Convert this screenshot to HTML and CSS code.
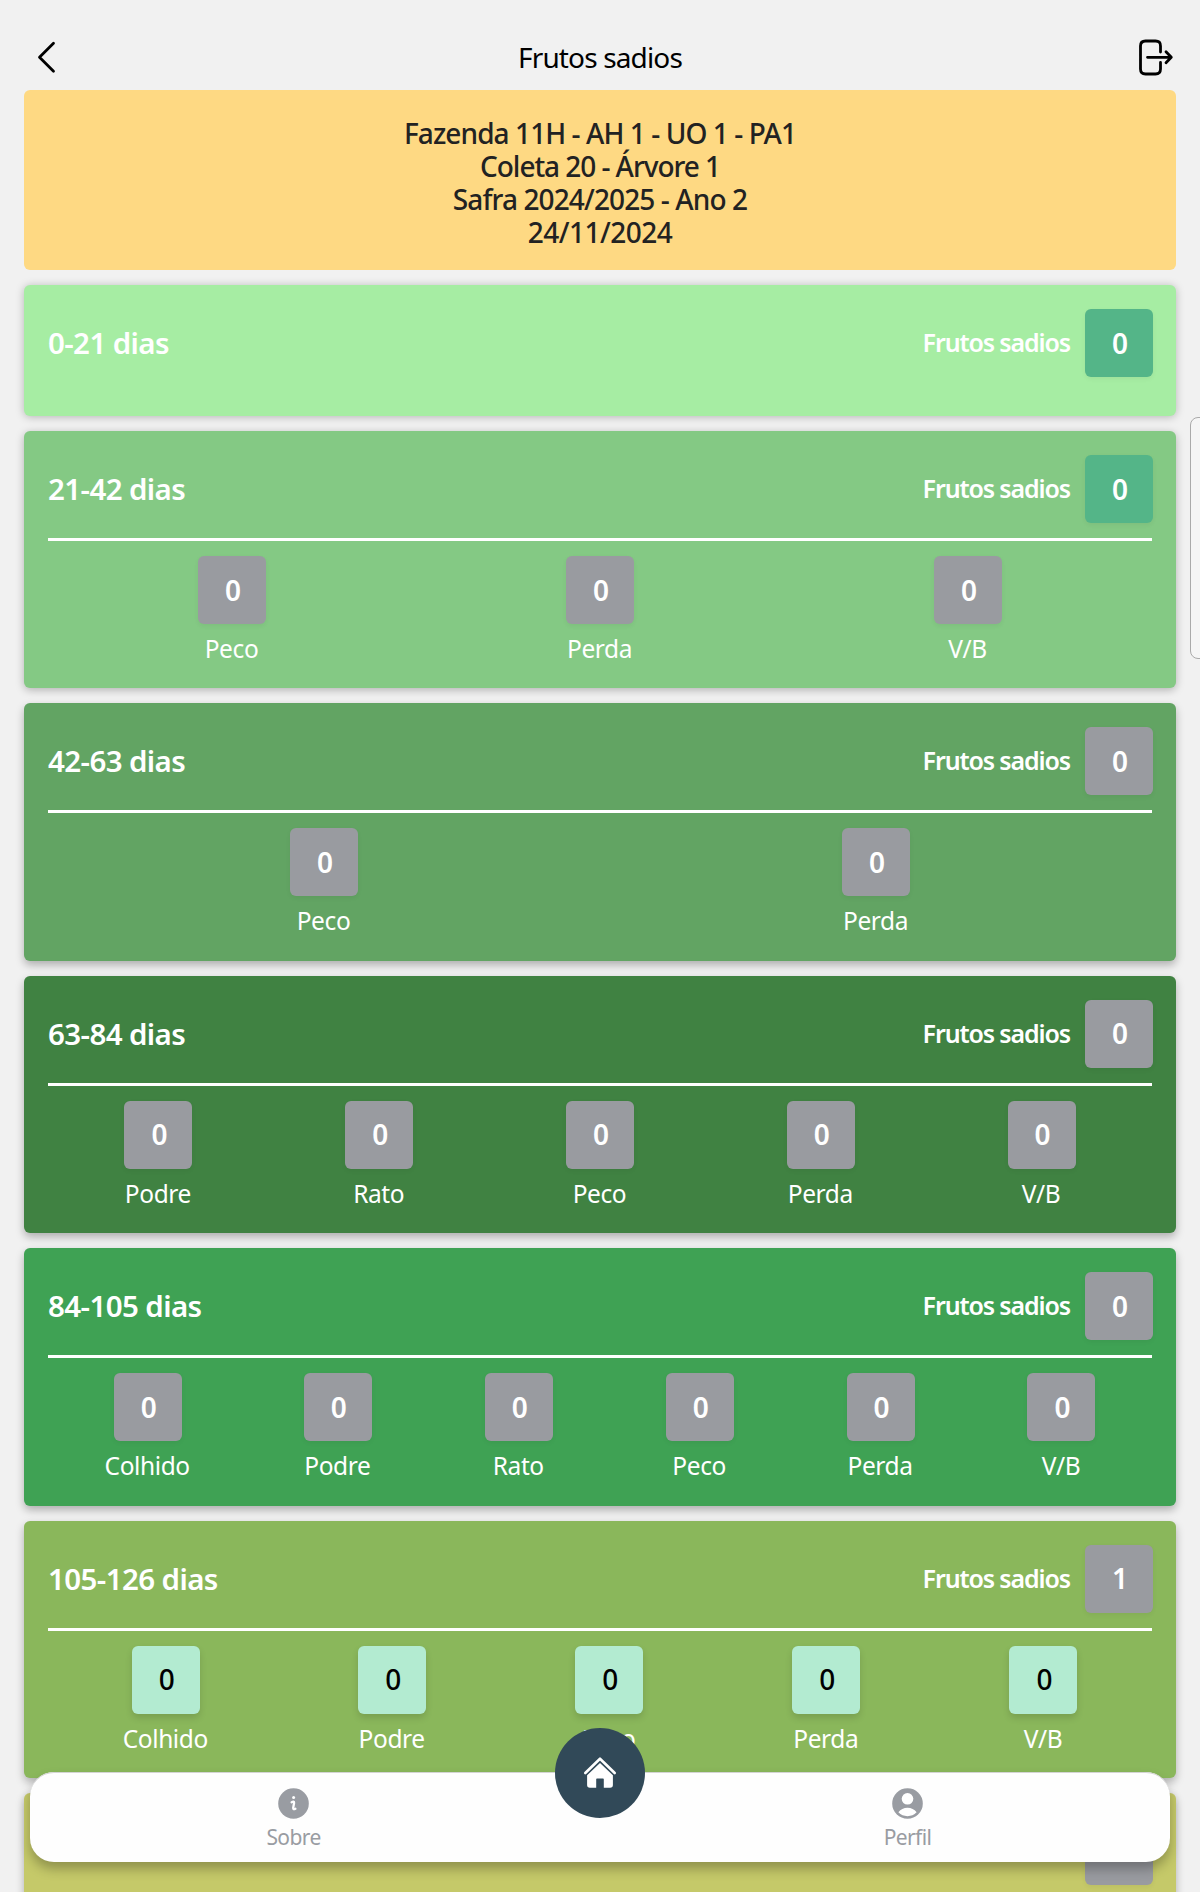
FILE: index.html
```
<!DOCTYPE html>
<html lang="pt-BR">
<head>
<meta charset="utf-8">
<title>Frutos sadios</title>
<link rel="stylesheet" href="styles.css">
</head>
<body>
<div class="screen">
  <header class="topbar">
    <svg class="topbar-icon" viewBox="0 0 40 40" width="40" height="40"><path d="M25.500 6.300 11.500 20.300l14 14"/></svg>
    <h1 class="topbar-title">Frutos sadios</h1>
    <svg class="topbar-icon" viewBox="0 0 40 40" width="40" height="40"><path d="M28.500 15V9q0-5-5-5H13.500q-5 0-5 5v23q0 5 5 5H23.500q5 0 5-5v-6.500M15.500 20.300H39M34 14.800l5.300 5.500-5.300 5.500"/></svg>
  </header>

  <main class="content">
    <section class="banner">
      <div class="line-farm">Fazenda 11H - AH 1 - UO 1 - PA1</div>
      <div class="line-tree">Coleta 20 - Árvore 1</div>
      <div>Safra 2024/2025 - Ano 2</div>
      <div class="line-date">24/11/2024</div>
    </section>

    <section class="card age-0">
      <div class="card-head"><h2>0-21 dias</h2><span class="healthy">Frutos sadios</span><span class="box teal">0</span></div>
    </section>

    <section class="card age-21">
      <div class="card-head"><h2>21-42 dias</h2><span class="healthy">Frutos sadios</span><span class="box teal">0</span></div>
      <div class="counts">
        <div class="count"><span class="box">0</span><span class="label">Peco</span></div>
        <div class="count"><span class="box">0</span><span class="label">Perda</span></div>
        <div class="count"><span class="box">0</span><span class="label">V/B</span></div>
      </div>
    </section>

    <section class="card age-42">
      <div class="card-head"><h2>42-63 dias</h2><span class="healthy">Frutos sadios</span><span class="box">0</span></div>
      <div class="counts">
        <div class="count"><span class="box">0</span><span class="label">Peco</span></div>
        <div class="count"><span class="box">0</span><span class="label">Perda</span></div>
      </div>
    </section>

    <section class="card age-63">
      <div class="card-head"><h2>63-84 dias</h2><span class="healthy">Frutos sadios</span><span class="box">0</span></div>
      <div class="counts">
        <div class="count"><span class="box">0</span><span class="label">Podre</span></div>
        <div class="count"><span class="box">0</span><span class="label">Rato</span></div>
        <div class="count"><span class="box">0</span><span class="label">Peco</span></div>
        <div class="count"><span class="box">0</span><span class="label">Perda</span></div>
        <div class="count"><span class="box">0</span><span class="label">V/B</span></div>
      </div>
    </section>

    <section class="card age-84">
      <div class="card-head"><h2>84-105 dias</h2><span class="healthy">Frutos sadios</span><span class="box">0</span></div>
      <div class="counts">
        <div class="count wide"><span class="box">0</span><span class="label">Colhido</span></div>
        <div class="count"><span class="box">0</span><span class="label">Podre</span></div>
        <div class="count"><span class="box">0</span><span class="label">Rato</span></div>
        <div class="count"><span class="box">0</span><span class="label">Peco</span></div>
        <div class="count"><span class="box">0</span><span class="label">Perda</span></div>
        <div class="count"><span class="box">0</span><span class="label">V/B</span></div>
      </div>
    </section>

    <section class="card age-105">
      <div class="card-head"><h2>105-126 dias</h2><span class="healthy">Frutos sadios</span><span class="box">1</span></div>
      <div class="counts">
        <div class="count wide"><span class="box mint">0</span><span class="label">Colhido</span></div>
        <div class="count"><span class="box mint">0</span><span class="label">Podre</span></div>
        <div class="count"><span class="box mint">0</span><span class="label">Peco</span></div>
        <div class="count"><span class="box mint">0</span><span class="label">Perda</span></div>
        <div class="count"><span class="box mint">0</span><span class="label">V/B</span></div>
      </div>
    </section>

    <section class="card age-126">
      <div class="card-head"><h2>126-147 dias</h2><span class="healthy">Frutos sadios</span><span class="box">0</span></div>
    </section>
  </main>

  <div class="edge-handle"></div>

  <nav class="tabbar">
    <a class="tab">
      <svg viewBox="0 0 31 31" width="31" height="31"><circle cx="15.500" cy="15.500" r="15.300" fill="#999ca2"/><circle cx="15.600" cy="9.400" r="1.500" fill="#fff"/><path d="M13.600 14.200q2.600-1.300 2.500.7l-.9 4.900q-.2 2.200 2.200.9" fill="none" stroke="#fff" stroke-width="2.300" stroke-linecap="round"/></svg>
      <span>Sobre</span>
    </a>
    <a class="tab">
      <svg viewBox="0 0 31 31" width="31" height="31"><circle cx="15.500" cy="15.500" r="15.300" fill="#999ca2"/><circle cx="15.500" cy="10.800" r="5.800" fill="#fff"/><path d="M6.400 24.300q3.400-4.500 9.100-4.500t9.100 4.500a12.700 12.700 0 0 1-18.200 0z" fill="#fff"/></svg>
      <span>Perfil</span>
    </a>
    <a class="home">
      <svg viewBox="0 0 34 34" width="34" height="34"><path d="M2.300 17 17 2.700 31.700 17" fill="none" stroke="#fff" stroke-width="2.600" stroke-linecap="round" stroke-linejoin="round"/><path d="M17 6.900 29.900 19.200V29q0 2.800-2.800 2.800h-6.300v-8.600q0-.8-.8-.8h-6q-.8 0-.8.8v8.600H6.900q-2.800 0-2.800-2.800v-9.800z" fill="#fff"/></svg>
    </a>
  </nav>
</div>
</body>
</html>
```
FILE: styles.css
```
* { box-sizing: border-box; }

body {
  margin: 0;
  background: #f1f1f1;
  font-family: "Noto Sans", sans-serif;
}

h1, h2 { margin: 0; }

.screen {
  position: relative;
  width: 1200px;
  height: 1892px;
  overflow: hidden;
}

/* top bar */
.topbar {
  display: flex;
  align-items: center;
  justify-content: space-between;
  height: 90px;
  padding: 24px 27px 0 28px;
}

.topbar-icon {
  fill: none;
  stroke: #000;
  stroke-width: 2.8;
  stroke-linecap: round;
  stroke-linejoin: round;
  overflow: visible;
}

.topbar-icon:last-child { margin-right: 1px; }

.topbar-title {
  font-size: 28px;
  font-weight: 400;
  line-height: 33px;
  letter-spacing: -0.85px;
  color: #000;
}

.content {
  display: flex;
  flex-direction: column;
  gap: 15px;
  padding: 0 24px;
}

.banner {
  height: 180px;
  padding: 27px 0 21px;
  border-radius: 6px;
  background: #fed983;
  color: #222;
  font-size: 28px;
  font-weight: 500;
  line-height: 33px;
  letter-spacing: -0.88px;
  text-align: center;
}

.line-farm { letter-spacing: -0.92px; }
.line-tree { letter-spacing: -1.05px; }
.line-date { letter-spacing: -0.5px; }

/* fruit age cards */
.card {
  flex: none;
  height: 257.4px;
  padding: 24px;
  border-radius: 6px;
  box-shadow: 0 4px 9px rgba(0, 0, 0, 0.28);
  color: #fff;
}

.age-0 { height: 131px; background: #a6eda3; box-shadow: 0 1px 8px rgba(0, 0, 0, 0.25); }
.age-21 { background: #84c984; box-shadow: 0 2px 8px rgba(0, 0, 0, 0.27); }
.age-42 { background: #62a463; }
.age-63 { background: #408242; }
.age-84 { background: #3fa254; }
.age-105 { background: #8ab75b; }
.age-126 { background: #c5c969; }

.card-head {
  display: flex;
  align-items: center;
  height: 68px;
  margin-right: -1px;
}

.card-head h2 {
  flex: 1;
  font-size: 29.5px;
  font-weight: 600;
  line-height: 36px;
  letter-spacing: -0.6px;
}

.healthy {
  margin-right: 15px;
  padding-bottom: 2px;
  font-size: 25px;
  font-weight: 600;
  letter-spacing: -1.13px;
}

.box {
  display: flex;
  align-items: center;
  justify-content: center;
  flex: none;
  width: 68px;
  height: 68px;
  padding: 0 0 1px 2px;
  border-radius: 6px;
  background: #999ba0;
  box-shadow: 0 2px 5px rgba(0, 0, 0, 0.05);
  font-size: 28px;
  font-weight: 600;
}

.teal { background: #54b588; }

.mint {
  background: #b3ebd1;
  box-shadow: 0 4px 7px rgba(0, 0, 0, 0.13);
  color: #000;
  font-weight: 500;
}

.counts {
  display: flex;
  justify-content: space-around;
  margin-top: 15px;
  padding-top: 15px;
  border-top: 3px solid #fff;
}

.count {
  display: flex;
  flex-direction: column;
  align-items: center;
  width: 68px;
}

.wide { width: 86.5px; }

.label {
  margin-top: 8px;
  margin-right: 1px;
  font-size: 24.5px;
  line-height: 33px;
  letter-spacing: -0.4px;
}

/* side panel handle, partly off the right edge */
.edge-handle {
  position: absolute;
  top: 417px;
  right: -12px;
  width: 22px;
  height: 242px;
  border: 1.5px solid #aaa;
  border-radius: 8px;
  background: #f5f5f5;
}

/* bottom navigation floating over the list */
.tabbar {
  position: absolute;
  left: 30px;
  bottom: 30px;
  display: grid;
  grid-template-columns: 1fr 1fr;
  column-gap: 89px;
  width: 1140px;
  height: 90px;
  padding-left: 1px;
  border-radius: 24px;
  background: #fefefe;
  box-shadow: 0 7px 12px rgba(0, 0, 0, 0.27), inset 0 1px 0 #d4d4d4;
}

.tab {
  display: flex;
  flex-direction: column;
  align-items: center;
  padding-top: 16px;
  color: #999ca2;
  font-size: 21px;
  line-height: 30px;
  letter-spacing: -0.6px;
}

.tab span { margin-top: 3px; }

.home {
  position: absolute;
  left: 525px;
  top: -44px;
  display: flex;
  align-items: center;
  justify-content: center;
  width: 90px;
  height: 90px;
  border-radius: 50%;
  background: #314958;
}
```
